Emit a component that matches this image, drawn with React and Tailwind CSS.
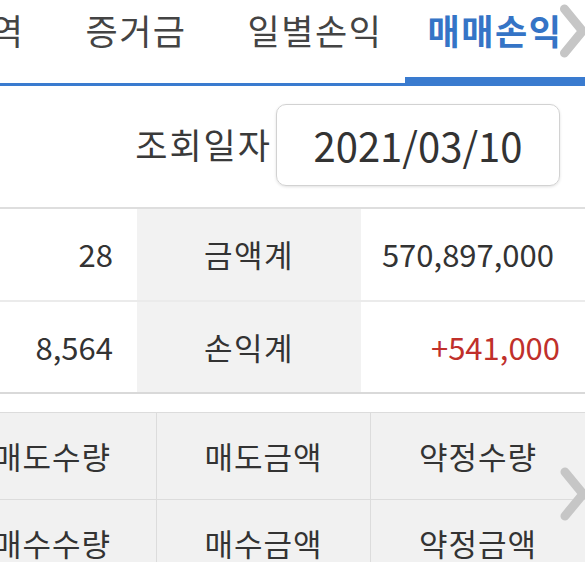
import React from 'react';

const tabs = [
  { label: '체결내역', w: 'w-[180px]' },
  { label: '증거금', w: 'w-[178px]' },
  { label: '일별손익', w: 'w-[180px]' },
  { label: '매매손익', w: 'w-[180px]', active: true },
];

function Chevron({ className }) {
  return (
    <svg className={className} viewBox="0 0 30 56" fill="none">
      <path d="M6 6 L24 28 L6 50" stroke="#c6c6c6" strokeWidth="9" strokeLinecap="round" strokeLinejoin="round" />
    </svg>
  );
}

export default function App() {
  return (
    <div
      className="w-[585px] h-[562px] overflow-hidden bg-white text-[#333]"
      style={{ fontFamily: '"Noto Sans CJK KR", "Noto Sans", sans-serif' }}
    >
      {/* 탭 */}
      <div className="relative h-[86px] border-b-[3px] border-[#3a7bcf] overflow-hidden">
        <div className="flex -ml-[133px] h-[83px]">
          {tabs.map((t) => (
            <div
              key={t.label}
              className={`${t.w} shrink-0 flex justify-center pt-[5px] text-[35px] leading-[50px] tracking-[1.5px] ${
                t.active ? 'border-b-[6px] border-[#3a7bcf] text-[#3574c6] font-bold' : 'text-[#444]'
              }`}
            >
              {t.label}
            </div>
          ))}
        </div>
        <Chevron className="absolute right-[-4px] top-[3px] w-[31px] h-[56px]" />
      </div>

      {/* 조회일자 */}
      <div className="h-[123px] flex items-center justify-end pr-[25px] pb-[4px] border-b-2 border-[#dedede]">
        <span className="text-[35px] mr-[4px] tracking-[2px] text-[#3a3a3a]">조회일자</span>
        <div className="w-[284px] h-[82px] rounded-[10px] border border-[#d2d2d2] shadow-[0_1px_3px_rgba(0,0,0,0.12)] flex items-center justify-center text-[40px] text-[#333]">
          2021/03/10
        </div>
      </div>

      {/* 합계 */}
      <div className="border-b-2 border-[#d9d9d9]">
        <div className="grid grid-cols-[137px_224px_224px] h-[93px] border-b-2 border-[#ebebeb]">
          <div className="flex items-center justify-end pr-[24px] text-[31px]">28</div>
          <div className="bg-[#f2f2f2] flex items-center justify-center text-[31px] tracking-[1.5px]">금액계</div>
          <div className="flex items-center justify-end pr-[31px] text-[31px]">570,897,000</div>
        </div>
        <div className="grid grid-cols-[137px_224px_224px] h-[90px]">
          <div className="flex items-center justify-end pr-[24px] text-[31px]">8,564</div>
          <div className="bg-[#f2f2f2] flex items-center justify-center text-[31px] tracking-[1.5px]">손익계</div>
          <div className="flex items-center justify-end pr-[25px] text-[31px] text-[#c0302b]">+541,000</div>
        </div>
      </div>

      {/* 헤더 */}
      <div className="relative mt-[18px] overflow-hidden border-t border-[#dcdcdc]">
        <div className="-ml-[52px] grid grid-cols-[209px_214px_214px] bg-[#f1f1f1] text-[31px] tracking-[1px] text-[#333]">
          {['매도수량', '매도금액', '약정수량', '매수수량', '매수금액', '약정금액'].map((h, i) => (
            <div
              key={h}
              className={`h-[87px] flex items-center justify-center border-[#dcdcdc] ${i % 3 !== 2 ? 'border-r' : ''} ${
                i < 3 ? 'border-b' : ''
              }`}
            >
              {h}
            </div>
          ))}
        </div>
        <Chevron className="absolute right-[-4px] top-[50px] w-[30px] h-[62px]" />
      </div>
    </div>
  );
}
